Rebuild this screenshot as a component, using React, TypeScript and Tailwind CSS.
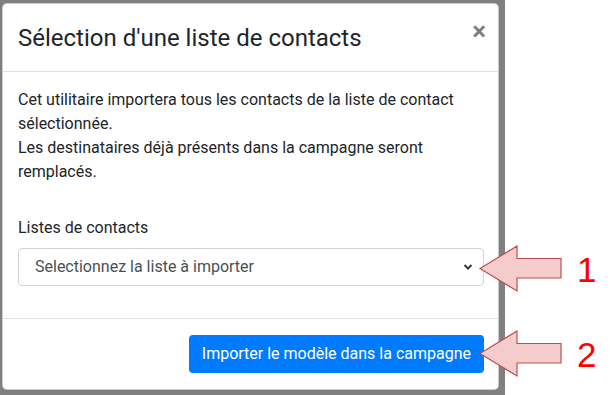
function Arrow({ top, label }: { top: number; label: string }) {
  return (
    <div className="absolute left-[478px] flex items-center" style={{ top }}>
      <svg width="86" height="49" viewBox="0 0 86 49">
        <polygon
          points="2,23.5 39,1 39,13.5 83,13.5 83,33 39,33 39,46 2,23.5"
          fill="#f4cccc"
          stroke="#c0504d"
          strokeWidth="1.2"
        />
      </svg>
      <span className="ml-[13px] text-[35px] leading-none text-[#ff0000] font-['Liberation_Sans',Arial,sans-serif]">
        {label}
      </span>
    </div>
  );
}

export default function App() {
  return (
    <div className="relative flex w-[611px] h-[395px] bg-white font-['Roboto','Liberation_Sans',sans-serif] text-[#212529]">
      <div className="w-[505px] h-full bg-[#808080] pl-[2px] pt-[3px]">
        <div className="w-[497px] h-[387px] bg-white rounded-[5px] border border-black/20 flex flex-col">
          {/* Header */}
          <div className="flex items-start justify-between pl-[15px] pr-[12px] pt-[16px] pb-[15px] border-b border-[#dee2e6]">
            <h5 className="text-[24px] leading-[36px]">Sélection d'une liste de contacts</h5>
            <button className="text-[26px] font-bold leading-none text-black/50 -mt-[2px]">×</button>
          </div>

          {/* Body */}
          <div className="px-[15px] pt-[16px] flex-1">
            <p className="text-[16px] leading-[24px]">
              Cet utilitaire importera tous les contacts de la liste de contact
              <br />
              sélectionnée.
              <br />
              Les destinataires déjà présents dans la campagne seront
              <br />
              remplacés.
            </p>
            <label className="block mt-[32px] mb-[8px] text-[16px] leading-[24px]">Listes de contacts</label>
            <div className="flex items-center justify-between w-[466px] h-[38px] border border-[#ced4da] rounded-[4px] pl-[16px] pr-[10px] text-[16px] text-[#495057]">
              <span>Selectionnez la liste à importer</span>
              <svg width="10" height="8" viewBox="0 0 10 8">
                <path d="M1.5 2 L5 5.5 L8.5 2" fill="none" stroke="#343a40" strokeWidth="2" />
              </svg>
            </div>
          </div>

          {/* Footer */}
          <div className="flex justify-end px-[14px] pt-[16px] pb-[16px] border-t border-[#dee2e6]">
            <button className="h-[38px] px-[13px] rounded-[4px] bg-[#007bff] text-white text-[16px] leading-[24px]">
              Importer le modèle dans la campagne
            </button>
          </div>
        </div>
      </div>

      <Arrow top={245} label="1" />
      <Arrow top={330} label="2" />
    </div>
  );
}
